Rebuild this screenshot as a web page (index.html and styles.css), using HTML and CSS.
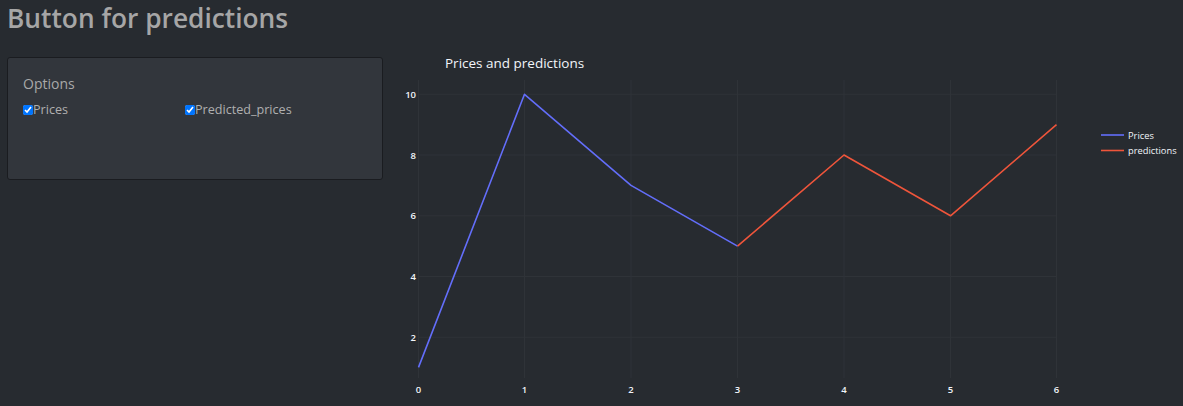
FILE: index.html
```html
<!DOCTYPE html>
<html lang="en">
<head>
    <meta charset="UTF-8">
    <meta name="viewport" content="width=device-width, initial-scale=1.0">
    <title>Button for predictions</title>
    <link rel="stylesheet" href="styles.css">
</head>
<body>
    <div class="page">
        <h1>Button for predictions</h1>

        <div class="row">
            <div class="card">
                <p class="card-title">Options</p>
                <div class="checks">
                    <label class="check"><input type="checkbox" checked>Prices</label>
                    <label class="check"><input type="checkbox" checked>Predicted_prices</label>
                </div>
            </div>

            <svg class="chart" width="793" height="349" viewBox="390 57 793 349">
                <text class="chart-title" x="445" y="68">Prices and predictions</text>

                <g class="grid">
                    <line x1="418" y1="337.3" x2="1057" y2="337.3"/>
                    <line x1="418" y1="276.5" x2="1057" y2="276.5"/>
                    <line x1="418" y1="215.8" x2="1057" y2="215.8"/>
                    <line x1="418" y1="155" x2="1057" y2="155"/>
                    <line x1="418" y1="94.3" x2="1057" y2="94.3"/>
                    <line x1="418.5" y1="80" x2="418.5" y2="378"/>
                    <line x1="524.5" y1="80" x2="524.5" y2="378"/>
                    <line x1="631" y1="80" x2="631" y2="378"/>
                    <line x1="737.5" y1="80" x2="737.5" y2="378"/>
                    <line x1="844" y1="80" x2="844" y2="378"/>
                    <line x1="950.5" y1="80" x2="950.5" y2="378"/>
                    <line x1="1056.5" y1="80" x2="1056.5" y2="378"/>
                </g>

                <g class="ticks-y">
                    <text x="416" y="97.5">10</text>
                    <text x="416" y="158.5">8</text>
                    <text x="416" y="219">6</text>
                    <text x="416" y="280">4</text>
                    <text x="416" y="340.5">2</text>
                </g>

                <g class="ticks-x">
                    <text x="418.5" y="392.5">0</text>
                    <text x="524.5" y="392.5">1</text>
                    <text x="631" y="392.5">2</text>
                    <text x="737.5" y="392.5">3</text>
                    <text x="844" y="392.5">4</text>
                    <text x="950.5" y="392.5">5</text>
                    <text x="1056.5" y="392.5">6</text>
                </g>

                <polyline class="trace-prices" points="418.5,367.4 524.5,94.3 631,185.4 737.5,246.1"/>
                <polyline class="trace-pred" points="737.5,246.1 844,155 950.5,215.8 1056.5,124.6"/>

                <g class="legend">
                    <line class="trace-prices" x1="1101" y1="135" x2="1124" y2="135"/>
                    <text x="1128" y="138.5">Prices</text>
                    <line class="trace-pred" x1="1101" y1="150.5" x2="1124" y2="150.5"/>
                    <text x="1128" y="154">predictions</text>
                </g>
            </svg>
        </div>
    </div>
</body>
</html>
```

FILE: styles.css
```css
body {
    margin: 0;
    padding: 0;
    background-color: #272b30;
    color: #aaaaaa;
    font-family: 'Open Sans', 'Noto Sans', sans-serif;
}

.page {
    padding: 0 7px;
}

h1 {
    margin: 0;
    font-size: 26.3px;
    font-weight: 600;
    line-height: 36px;
    color: #a6a6a6;
}

.row {
    display: flex;
    align-items: flex-start;
    margin-top: 21px;
}

.card {
    box-sizing: border-box;
    width: 376px;
    height: 123px;
    flex-shrink: 0;
    padding: 16px 15px;
    background-color: #32363c;
    border: 1px solid #1a1c20;
    border-radius: 3px;
}

.card-title {
    margin: 0 0 6px;
    font-size: 14px;
    line-height: 20px;
    color: #a9a9a9;
}

.checks {
    display: grid;
    grid-template-columns: 162px auto;
}

.check {
    display: flex;
    align-items: center;
    font-size: 12.6px;
    line-height: 20px;
    color: #b0b0b0;
}

.check input {
    width: 10px;
    height: 10px;
    margin: 0;
    accent-color: #0075ff;
}

.chart {
    display: block;
    margin-left: 7px;
    flex-shrink: 0;
    overflow: visible;
    font-family: 'Open Sans', 'Noto Sans', sans-serif;
}

.chart-title {
    font-size: 13.5px;
    fill: #f2f5fa;
}

.grid line {
    stroke: #2f3338;
    stroke-width: 1;
}

.ticks-y text,
.ticks-x text {
    font-size: 9.5px;
    font-weight: 600;
    fill: #f2f5fa;
}

.legend text {
    font-size: 9.3px;
    fill: #f2f5fa;
}

.ticks-y text {
    text-anchor: end;
}

.ticks-x text {
    text-anchor: middle;
}

.trace-prices,
.trace-pred {
    fill: none;
    stroke-width: 1.6;
    stroke-linejoin: round;
}

.trace-prices {
    stroke: #636efa;
}

.trace-pred {
    stroke: #ef553b;
}
```
